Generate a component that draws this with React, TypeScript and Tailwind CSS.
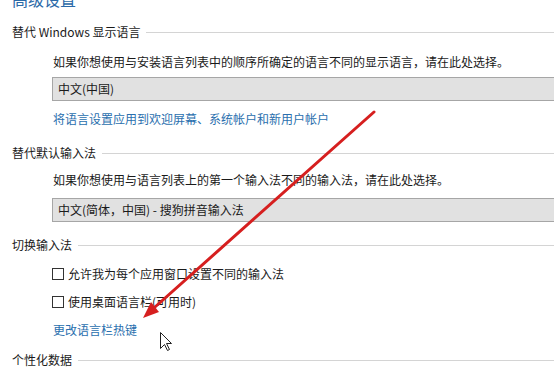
import React from 'react';

const font = { fontFamily: '"Noto Sans CJK SC", "Noto Sans", sans-serif' };

const SectionHeader = ({ label, className = '' }: { label: string; className?: string }) => (
  <div className={`flex items-center gap-[6px] text-[12px] leading-4 text-[#1a1a1a] ${className}`}>
    <span className="whitespace-nowrap">{label}</span>
    <div className="h-px flex-1 bg-[#d4d4d4]" />
  </div>
);

const Dropdown = ({ value, className = '' }: { value: string; className?: string }) => (
  <div className={`ml-[40px] h-[24px] w-[560px] shrink-0 border border-[#a6a6a6] bg-[#e1e1e1] pl-[5px] text-[12px] leading-[22px] text-[#1a1a1a] ${className}`}>
    {value}
  </div>
);

const Checkbox = ({ label, className = '' }: { label: string; className?: string }) => (
  <div className={`ml-[40px] flex items-center gap-[4px] text-[12px] leading-4 text-[#1a1a1a] ${className}`}>
    <span className="h-[12px] w-[12px] border border-[#333] bg-white" />
    <span>{label}</span>
  </div>
);

export default function App() {
  return (
    <div style={font} className="relative h-[382px] w-[554px] overflow-hidden bg-white pl-3">
      <div className="-mt-[9px] text-[16px] leading-4 text-[#2b6aa8]">高级设置</div>

      <SectionHeader label="替代 Windows 显示语言" className="mt-[17px]" />
      <p className="ml-[41px] mt-[14px] whitespace-nowrap text-[12px] leading-4 text-[#1a1a1a]">
        如果你想使用与安装语言列表中的顺序所确定的语言不同的显示语言，请在此处选择。
      </p>
      <Dropdown value="中文(中国)" className="mt-[7px]" />
      <a className="ml-[41px] mt-[10px] block whitespace-nowrap text-[12px] leading-4 text-[#2a6fae]">
        将语言设置应用到欢迎屏幕、系统帐户和新用户帐户
      </a>

      <SectionHeader label="替代默认输入法" className="mt-[18px]" />
      <p className="ml-[41px] mt-[11px] whitespace-nowrap text-[12px] leading-4 text-[#1a1a1a]">
        如果你想使用与语言列表上的第一个输入法不同的输入法，请在此处选择。
      </p>
      <Dropdown value="中文(简体，中国) - 搜狗拼音输入法" className="mt-[10px]" />

      <SectionHeader label="切换输入法" className="mt-[15px]" />
      <Checkbox label="允许我为每个应用窗口设置不同的输入法" className="mt-[13px]" />
      <Checkbox label="使用桌面语言栏(可用时)" className="mt-[12px]" />
      <a className="ml-[41px] mt-[12px] block whitespace-nowrap text-[12px] leading-4 text-[#2a6fae]">
        更改语言栏热键
      </a>

      <SectionHeader label="个性化数据" className="mt-[14px]" />
      <p className="ml-[41px] mt-[13px] whitespace-nowrap text-[12px] leading-4 text-[#1a1a1a]">
        此数据仅用于改善未使用输入法的语言的手写识别和文本预测结果
      </p>

      {/* annotation arrow + mouse pointer drawn over the page */}
      <svg className="pointer-events-none absolute left-0 top-0" width="554" height="382">
        <line x1="374" y1="112" x2="155" y2="307" stroke="#d61f1f" strokeWidth="3" strokeLinecap="round" />
        <polygon points="143,318 159,312 151,302" fill="#d61f1f" />
        <path
          d="M160.5 332.5 L160.5 348.5 L164.5 344.5 L167.5 350.5 L169.5 349.5 L166.5 343.5 L171.5 343.5 Z"
          fill="#fff"
          stroke="#222"
          strokeWidth="1"
          strokeLinejoin="round"
        />
      </svg>
    </div>
  );
}
